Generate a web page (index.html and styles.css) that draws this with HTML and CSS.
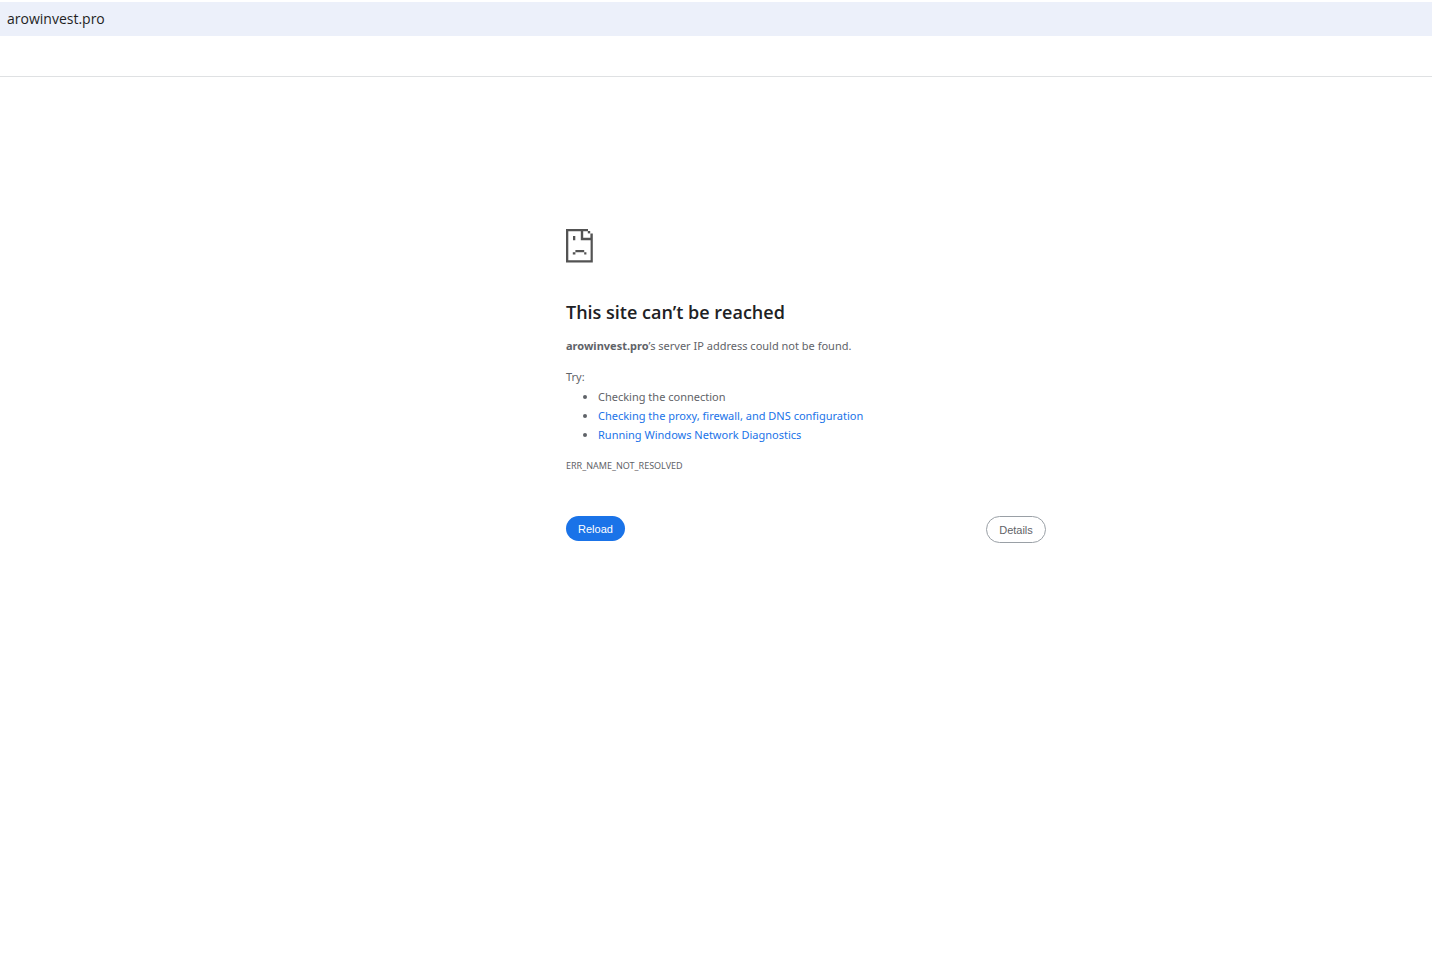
FILE: index.html
```
<!DOCTYPE html>
<html lang="en">

<head>
	<meta charset="UTF-8">
	<meta name="viewport" content="width=device-width, initial-scale=1.0">
	<title>arowinvest.pro</title>
	<link rel="stylesheet" href="styles.css">
</head>

<body>
	<header>
		<input type="text" class="address" aria-label="Address" value="arowinvest.pro" spellcheck="false">
		<div class="bookmarks"></div>
	</header>

	<main>
		<div class="wrapper">
			<!-- Sad page icon -->
			<svg class="icon" viewBox="0 0 27 34" aria-hidden="true">
				<g fill="#535353">
					<path d="M0 0H22V2.3H2.3V31.3H24.6V11.2H14.8V2H17.2V8.8H24.4V4.4H26.8V33.6H0Z" />
					<path d="M21.8 2H24.2V4.4H21.8Z" />
					<path d="M7 7H9.3V11.2H7ZM9.4 21H18.2V23.3H9.4ZM6.8 23.3H9.4V25.6H6.8ZM18.2 23.3H20.4V25.6H18.2Z" />
				</g>
			</svg>

			<h1>This site can’t be reached</h1>
			<p><strong>arowinvest.pro</strong>’s server IP address could not be found.</p>

			<div class="suggestions">
				<p>Try:</p>
				<ul>
					<li>Checking the connection</li>
					<li><a href="#buttons">Checking the proxy, firewall, and DNS configuration</a></li>
					<li><a href="#diagnose">Running Windows Network Diagnostics</a></li>
				</ul>
			</div>

			<div class="error-code">ERR_NAME_NOT_RESOLVED</div>

			<div class="buttons" id="buttons">
				<button type="button" class="reload-button">Reload</button>
				<button type="button" class="details-button">Details</button>
			</div>
		</div>
	</main>
</body>

</html>
```
FILE: styles.css
```
* {
	margin: 0;
	padding: 0;
	box-sizing: border-box;
}

body {
	background-color: #fff;
	color: #5f6368;
	font-family: "Segoe UI", "Noto Sans", sans-serif;
	font-size: 11px;
	line-height: 19px;
}

header {
	padding-top: 2px;
	border-bottom: 1px solid #dfe1e3;
}

.address {
	display: block;
	width: 100%;
	height: 34px;
	padding: 0 7px 2px;
	border: none;
	outline: none;
	background-color: #ecf0fa;
	color: #1f1f1f;
	font-family: "Segoe UI", "Open Sans", sans-serif;
	font-size: 14px;
}

.bookmarks {
	height: 40px;
}

/* The side panel space keeps the message right of centre */
main {
	padding-left: 180px;
}

.wrapper {
	max-width: 480px;
	margin: 0 auto;
	padding-top: 152px;
}

.icon {
	display: block;
	width: 27px;
	height: 34px;
	margin-bottom: 38px;
}

h1 {
	margin-bottom: 13px;
	color: #202124;
	font-family: "Segoe UI", "Open Sans", sans-serif;
	font-size: 18px;
	font-weight: 600;
	line-height: 22px;
}

.suggestions {
	margin-top: 12px;
}

.suggestions ul {
	padding-top: 1px;
	padding-left: 32px;
}

a {
	color: #1a73e8;
	text-decoration: none;
}

a:hover {
	text-decoration: underline;
}

.error-code {
	margin-top: 12px;
	font-size: 9px;
}

.buttons {
	display: flex;
	justify-content: space-between;
	align-items: flex-start;
	margin-top: 41px;
}

button {
	border-radius: 16px;
	cursor: pointer;
	font-family: "Liberation Sans", Arial, sans-serif;
	font-size: 11px;
}

.reload-button {
	width: 59px;
	height: 25px;
	border: none;
	background-color: #1a73e8;
	color: #fff;
}

.details-button {
	width: 60px;
	height: 27px;
	border: 1px solid #9aa0a6;
	background-color: #fff;
	color: #5f6368;
}
```
